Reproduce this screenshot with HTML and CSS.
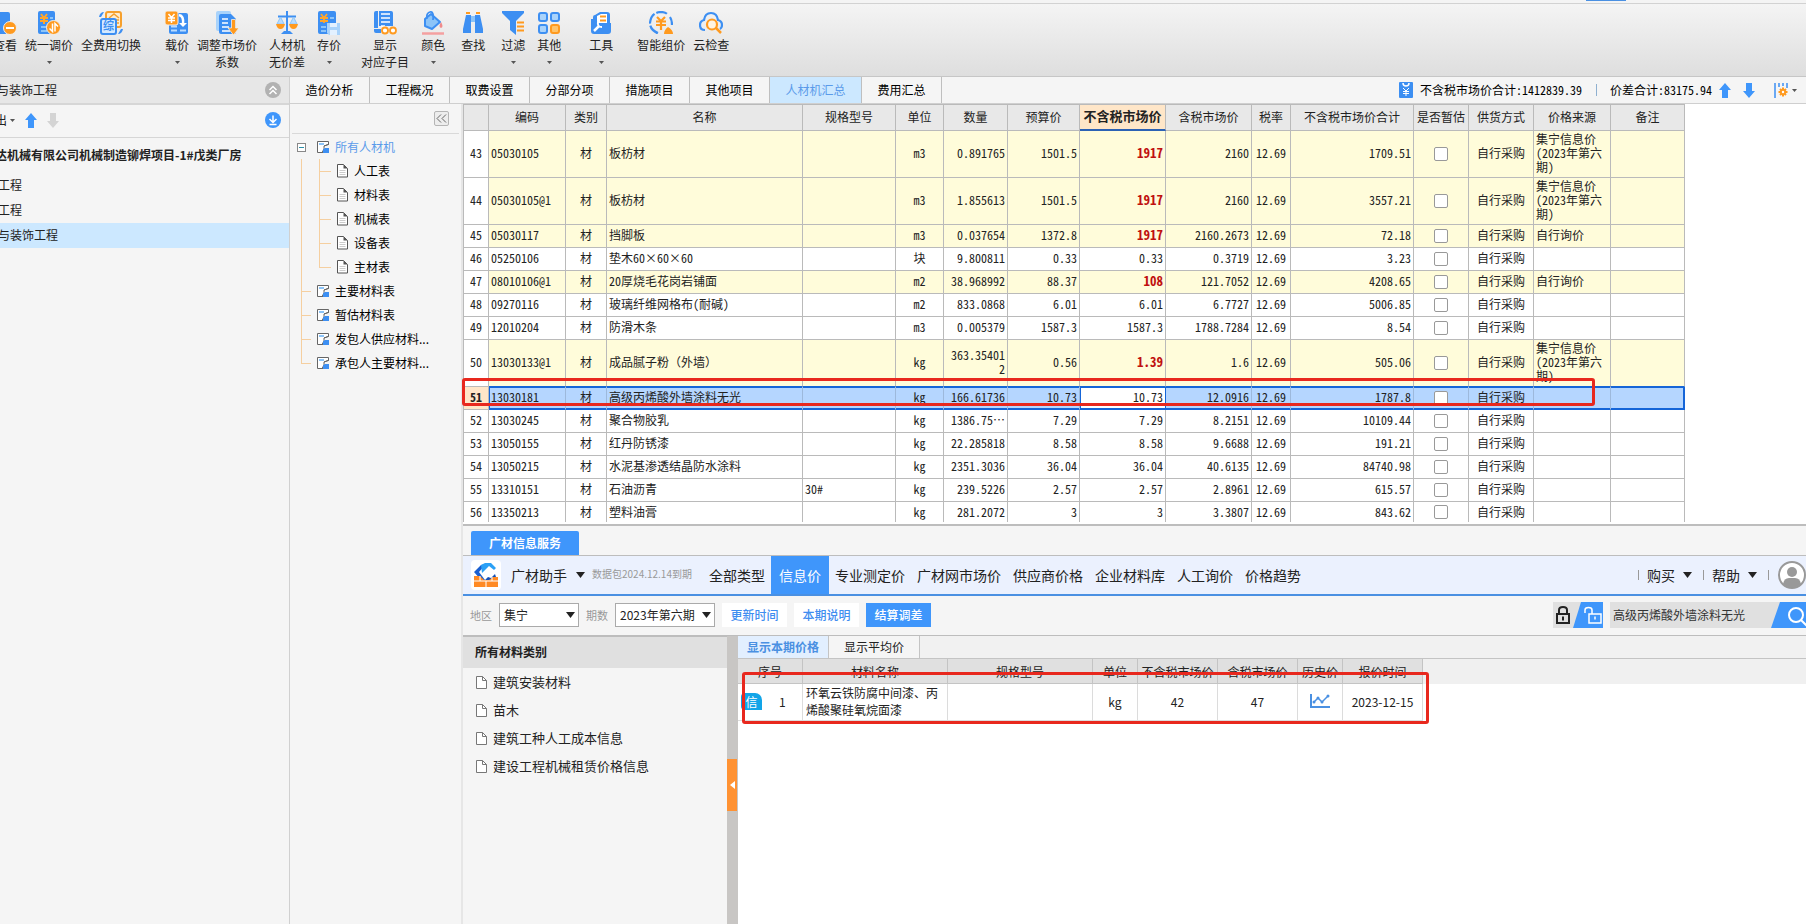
FILE: index.html
```html
<!DOCTYPE html>
<html lang="zh-CN">
<head>
<meta charset="utf-8">
<title>人材机汇总</title>
<link rel="stylesheet" href="styles.css">
</head>
<body>
<svg class="defs" aria-hidden="true">
  <symbol id="i-sheet" viewBox="0 0 14 14"><path d="M1.500 1.500h11v3L8 6v3l-2 3.500H1.500z" fill="#fff" stroke="#666"/><path d="M3 3h5v2H3z" fill="#8cc4f8"/><path d="M8 6l5-2M6 12.500h7" stroke="#666" fill="none"/><path d="M7 9.500L9 8h4v5H7z" fill="#3d8ff2"/></symbol>
  <symbol id="i-doc" viewBox="0 0 11 14"><path d="M.5 .5h6l4 4v8.500H.5z" fill="#fff" stroke="#555"/><path d="M6.500 .5v4h4z" fill="#555"/><path d="M2.500 6.500h6M2.500 8.500h6M2.500 10.500h6" stroke="#ccc"/></symbol>
  <symbol id="i-file" viewBox="0 0 11 13"><path d="M.5 .5h6l4 4v8H.5z" fill="#fff" stroke="#777"/><path d="M6.500 .5v4h4" fill="none" stroke="#777"/></symbol>
  <symbol id="i-caret" viewBox="0 0 5 3"><path d="M0 0h5L2.500 3z" fill="currentColor"/></symbol>
  <symbol id="i-up" viewBox="0 0 12 15"><path d="M6 0l6 7H9v8H3V7H0z" fill="currentColor"/></symbol>
  <symbol id="i-down" viewBox="0 0 12 15"><path d="M6 15l6-7H9V0H3v8H0z" fill="currentColor"/></symbol>
</svg>
<div class="app">
  <div class="strip"><span class="strip-mark"></span></div>
  <div class="ribbon">
    <button class="tool"><svg viewBox="0 0 24 24"><rect x="0" y="1" width="17" height="22" rx="2" fill="#3d8ff2"/><circle cx="17" cy="17" r="6.500" fill="#ff9a1f" stroke="#eee"/><path d="M13 17h8" stroke="#fff" stroke-width="2"/></svg><span>查看</span></button>
    <button class="tool"><svg viewBox="0 0 24 24"><rect x="1" y="0" width="17" height="23" rx="2" fill="#3d8ff2"/><path d="M4 3l3 4 3-4M3 7h8M3 10h8M7 7v6" stroke="#ffa62b" stroke-width="2" fill="none"/><path d="M4 16h6M4 20h6M13 7h3" stroke="#8cc4f8" stroke-width="2"/><circle cx="16.500" cy="16.500" r="7" fill="#ff9a1f" stroke="#f0f0f0"/><path d="M15.500 12.500v8l-3-3M18 20.500v-8l3 3" stroke="#fff" stroke-width="1.500" fill="none"/></svg><span>统一调价</span><svg class="dd"><use href="#i-caret"/></svg></button>
    <button class="tool"><svg viewBox="0 0 24 24"><rect x="7" y="1" width="15" height="15" rx="2" fill="#ffeccc" stroke="#f6a02d" stroke-width="2"/><path d="M10 7l5-4 5 4M17 9h3M17 12h3" stroke="#f6a02d" stroke-width="1.500" fill="none"/><path d="M0 6q1-5 5-5L2 6zM24 18q-1 5-5 5l3-5z" fill="#3d8ff2"/><rect x="2" y="8" width="15" height="15" rx="2" fill="#d4e9ff" stroke="#3d8ff2" stroke-width="2"/><text x="4" y="19" class="glyph">综</text></svg><span>全费用切换</span></button>
    <button class="tool g16"><svg viewBox="0 0 24 24"><rect x="4" y="2" width="19" height="21" rx="2" fill="#3d8ff2"/><path d="M6 15.500h6M6 19.500h6M15 19.500h6" stroke="#b9dcff" stroke-width="2"/><rect x="0" y="0" width="13" height="14" rx="2" fill="#ff9a1f" stroke="#f0f0f0"/><path d="M3.500 3L6.500 6.500 9.500 3M3 7h7M3 9.500h7M6.500 7v5" stroke="#fff" stroke-width="1.500" fill="none"/><path d="M14 4q5 1 4 9" stroke="#fff" stroke-width="2.500" fill="none"/><path d="M14 12h8l-4 4z" fill="#fff"/></svg><span>载价</span><svg class="dd"><use href="#i-caret"/></svg></button>
    <button class="tool"><svg viewBox="0 0 24 24"><rect x="1" y="0" width="15" height="20" rx="2" fill="#a9d3fb"/><path d="M4 5q0-2 2-2h10l5 5v13q0 2-2 2H6q-2 0-2-2z" fill="#3d8ff2"/><path d="M7 8h6M7 12h6M7 16h7M7 20h8" stroke="#fff" stroke-width="1.500"/><path d="M16.500 8.500h4V17h3.500l-5.500 7-5.500-7h3.500z" fill="#ff9a1f" stroke="#f0f0f0" stroke-width=".8"/></svg><span>调整市场价<br>系数</span></button>
    <button class="tool g4"><svg viewBox="0 0 24 24"><path d="M12 0v22M3 5.500h18" stroke="#3d8ff2" stroke-width="2"/><path d="M6 23h12l-3-3H9z" fill="#3d8ff2"/><path d="M5.500 6L2 13h7zM18.500 6L15 13h7z" fill="#b9dcff" stroke="#8cc4f8"/><path d="M1 13h9q-1 5-4.500 5T1 13zM14 13h9q-1 5-4.500 5T14 13z" fill="#ff9a1f"/></svg><span>人材机<br>无价差</span></button>
    <button class="tool g4"><svg viewBox="0 0 24 24"><rect x="1" y="0" width="18" height="23" rx="2" fill="#3d8ff2"/><path d="M4 3l3 4 3-4M3 7h8M3 10h8M7 7v5" stroke="#ffa62b" stroke-width="1.800" fill="none"/><path d="M4 16h5M4 20h5M13 7h4" stroke="#8cc4f8" stroke-width="2"/><path d="M10 12h13v12H12l-2-2z" fill="#a9d3fb"/><path d="M13 12h7v4h-7zM13 19h7v5h-7z" fill="#e3f1ff"/></svg><span>存价</span><svg class="dd"><use href="#i-caret"/></svg></button>
    <button class="tool g12"><svg viewBox="0 0 24 24"><path d="M1 2q0-2 2-2h2v17H1zM1 18h7v4H3q-2 0-2-2z" fill="#3d8ff2"/><path d="M6 0h12q2 0 2 2v13H6z" fill="#3d8ff2"/><path d="M8 3h9M8 7h9M8 11h9M8 15h4" stroke="#fff" stroke-width="1.500"/><circle cx="12" cy="19.500" r="3" fill="#fff" stroke="#ff9a1f" stroke-width="1.800"/><circle cx="20" cy="19.500" r="3" fill="#fff" stroke="#ff9a1f" stroke-width="1.800"/></svg><span>显示<br>对应子目</span></button>
    <button class="tool g4"><svg viewBox="0 0 24 24"><path d="M10 3l9 8-8 7-7-3V8z" fill="#8cc4f8" stroke="#3d8ff2" stroke-width="2" stroke-linejoin="round"/><path d="M6 8q-1-6 3-7t3 8" fill="none" stroke="#3d8ff2" stroke-width="1.800"/><path d="M20 11q3 5 0 6-3-1 0-6z" fill="#f08b8b"/><path d="M1 22.500h22" stroke="#f4a0a0" stroke-width="2.500"/></svg><span>颜色</span><svg class="dd"><use href="#i-caret"/></svg></button>
    <button class="tool g8"><svg viewBox="0 0 24 24"><path d="M5 4h5v18H2V18zM14 4h5l3 14v4h-8z" fill="#3d8ff2"/><path d="M10 5h4v6h-4z" fill="#8cc4f8"/><path d="M5 2h4M15 2h4" stroke="#ff9a1f" stroke-width="2"/></svg><span>查找</span></button>
    <button class="tool g8"><svg viewBox="0 0 24 24"><path d="M1 0h22v2l-8 8v14l-6-5v-9L1 2z" fill="#3d8ff2"/><path d="M16 11.500h7M16 15.500h7M16 19.500h7" stroke="#ff9a1f" stroke-width="2"/></svg><span>过滤</span><svg class="dd"><use href="#i-caret"/></svg></button>
    <button class="tool g4"><svg viewBox="0 0 24 24"><g fill="#a9d3fb" stroke="#3d8ff2" stroke-width="2"><rect x="2" y="2" width="8" height="8" rx="2"/><rect x="14" y="2" width="8" height="8" rx="2"/><rect x="2" y="14" width="8" height="8" rx="2"/></g><rect x="14" y="14" width="8" height="8" rx="2" fill="#ffc46b" stroke="#ff9a1f" stroke-width="2"/></svg><span>其他</span><svg class="dd"><use href="#i-caret"/></svg></button>
    <button class="tool g20"><svg viewBox="0 0 24 24"><path d="M4 6q0-2 2-2l5-3h7q3 0 3 3v10H4z" fill="#3d8ff2"/><path d="M8 5l4-2h6v11H8z" fill="#fff"/><path d="M11 5.500h6M11 9.500h6" stroke="#ff9a1f" stroke-width="1.800"/><path d="M2 8h4l3 4h13v8q0 3-3 3H5q-3 0-3-3z" fill="#3d8ff2"/><path d="M5 20l5-5" stroke="#fff" stroke-width="2.500"/><path d="M9 11q-1 5 4 5" stroke="#fff" stroke-width="2" fill="none"/></svg><span>工具</span><svg class="dd"><use href="#i-caret"/></svg></button>
    <button class="tool g16"><svg viewBox="0 0 24 24"><path d="M9 22Q1 19 1 12 2 1.500 12 1q5 0 7 3M21 6q2 3 2 8M4 19l4 3" stroke="#3d8ff2" stroke-width="2.200" fill="none" stroke-dasharray="11 2"/><path d="M8 6l4 4 4-4M7 10.500h10M7 14h10M12 10v9" stroke="#ff9a1f" stroke-width="2.200" fill="none"/><path d="M15 23q0-4 4-7 5 3 5 7z" fill="#ff9a1f"/></svg><span>智能组价</span></button>
    <button class="tool"><svg viewBox="0 0 24 24"><path d="M6 19q-5 0-5-5 0-4 4-5 1-7 7-7t7 7q4 1 4 5 0 3-2 4" stroke="#3d8ff2" stroke-width="2.200" fill="none"/><circle cx="13" cy="13.500" r="5" fill="#fff4e0" stroke="#ff9a1f" stroke-width="2.200"/><path d="M17 17l5 5" stroke="#ff9a1f" stroke-width="2.500"/></svg><span>云检查</span></button>
  </div>
  <div class="body">
    <aside class="side">
      <div class="side-head"><span>与装饰工程</span><button class="round grey" aria-label="收起"><svg viewBox="0 0 16 16"><path d="M4.500 8L8 4.500 11.500 8M4.500 12L8 8.500l3.500 3.500" stroke="#fff" stroke-width="1.500" fill="none"/></svg></button></div>
      <div class="side-tools"><button class="exp">出<svg class="dd"><use href="#i-caret"/></svg></button><button class="arw" aria-label="上移"><svg><use href="#i-up"/></svg></button><button class="arw off" aria-label="下移"><svg><use href="#i-down"/></svg></button><button class="round blue" aria-label="下载"><svg viewBox="0 0 16 16"><path d="M8 3.500V10M4.500 7L8 10.500 11.500 7M4.500 12.500h7" stroke="#fff" stroke-width="1.500" fill="none"/></svg></button></div>
      <div class="proj">达机械有限公司机械制造铆焊项目-1#戊类厂房</div>
      <div class="proj-row">工程</div>
      <div class="proj-row">工程</div>
      <div class="proj-row on">与装饰工程</div>
    </aside>
    <div class="work">
      <div class="tabbar">
        <button>造价分析</button><button>工程概况</button><button>取费设置</button><button>分部分项</button><button>措施项目</button><button>其他项目</button><button class="on">人材机汇总</button><button>费用汇总</button>
        <div class="sum">
          <svg width="14" height="16" viewBox="0 0 14 16"><rect width="14" height="16" rx="1" fill="#3d8ff2"/><path d="M4 1q0 3 3 3t3-3" fill="none" stroke="#fff" stroke-width="1.500"/><path d="M4 6l3 3 3-3M4 9.500h6M4 11.500h6M7 9v5" fill="none" stroke="#fff"/></svg>
          <span class="half">不含税市场价合计:1412839.39</span><i class="bar"></i><span class="half">价差合计:83175.94</span>
          <button class="arw" aria-label="上移"><svg><use href="#i-up"/></svg></button><button class="arw" aria-label="下移"><svg><use href="#i-down"/></svg></button>
          <button class="cfg" aria-label="设置"><svg width="14" height="15" viewBox="0 0 14 15"><path d="M1 0v15M5 0v4M9 0v3M13 0v5" stroke="#3d8ff2" stroke-width="1.500"/><path d="M9 4.500v9M4.500 9h9M6 6l6 6M12 6l-6 6" stroke="#ff9a1f" stroke-width="2"/><circle cx="9" cy="9" r="3" fill="#ff9a1f"/><circle cx="9" cy="9" r="1.200" fill="#fff"/></svg><svg class="dd"><use href="#i-caret"/></svg></button>
        </div>
      </div>
      <div class="cols">
        <nav class="tree">
          <div class="tree-top"><button aria-label="折叠"><svg width="11" height="9" viewBox="0 0 11 9"><path d="M5 .5l-4 4 4 4M10 .5l-4 4 4 4" fill="none" stroke="#666"/></svg></button></div>
          <ul class="root">
            <li class="top"><div class="node"><button class="fold" aria-label="折叠"></button><svg class="s"><use href="#i-sheet"/></svg><a href="#">所有人材机</a></div>
              <ul class="kids">
                <li><svg class="d"><use href="#i-doc"/></svg><span>人工表</span></li><li><svg class="d"><use href="#i-doc"/></svg><span>材料表</span></li><li><svg class="d"><use href="#i-doc"/></svg><span>机械表</span></li><li><svg class="d"><use href="#i-doc"/></svg><span>设备表</span></li><li><svg class="d"><use href="#i-doc"/></svg><span>主材表</span></li>
              </ul></li>
            <li class="leaf"><svg class="s"><use href="#i-sheet"/></svg><span>主要材料表</span></li>
            <li class="leaf"><svg class="s"><use href="#i-sheet"/></svg><span>暂估材料表</span></li>
            <li class="leaf"><svg class="s"><use href="#i-sheet"/></svg><span>发包人供应材料...</span></li>
            <li class="leaf"><svg class="s"><use href="#i-sheet"/></svg><span>承包人主要材料...</span></li>
          </ul>
        </nav>
        <main class="main">
          <section class="sheet">
            <table class="grid half">
              <colgroup><col class="w25"><col class="w77"><col class="w41"><col class="w196"><col class="w93"><col class="w48"><col class="w64"><col class="w72"><col class="w86"><col class="w86"><col class="w39"><col class="w123"><col class="w55"><col class="w65"><col class="w77"><col class="w74"></colgroup>
              <thead><tr><th></th><th>编码</th><th>类别</th><th>名称</th><th>规格型号</th><th>单位</th><th>数量</th><th>预算价</th><th class="cur">不含税市场价</th><th>含税市场价</th><th>税率</th><th>不含税市场价合计</th><th>是否暂估</th><th>供货方式</th><th>价格来源</th><th>备注</th></tr></thead>
              <tbody>
              <tr class="y tall"><th>43</th><td>05030105</td><td>材</td><td>板枋材</td><td></td><td>m3</td><td>0.891765</td><td>1501.5</td><td>1917</td><td>2160</td><td>12.69</td><td>1709.51</td><td><input type="checkbox" aria-label="暂估"></td><td>自行采购</td><td>集宁信息价(2023年第六期)</td><td></td></tr>
              <tr class="y tall"><th>44</th><td>05030105@1</td><td>材</td><td>板枋材</td><td></td><td>m3</td><td>1.855613</td><td>1501.5</td><td>1917</td><td>2160</td><td>12.69</td><td>3557.21</td><td><input type="checkbox" aria-label="暂估"></td><td>自行采购</td><td>集宁信息价(2023年第六期)</td><td></td></tr>
              <tr class="y"><th>45</th><td>05030117</td><td>材</td><td>挡脚板</td><td></td><td>m3</td><td>0.037654</td><td>1372.8</td><td>1917</td><td>2160.2673</td><td>12.69</td><td>72.18</td><td><input type="checkbox" aria-label="暂估"></td><td>自行采购</td><td>自行询价</td><td></td></tr>
              <tr><th>46</th><td>05250106</td><td>材</td><td>垫木60×60×60</td><td></td><td>块</td><td>9.800811</td><td>0.33</td><td>0.33</td><td>0.3719</td><td>12.69</td><td>3.23</td><td><input type="checkbox" aria-label="暂估"></td><td>自行采购</td><td></td><td></td></tr>
              <tr class="y"><th>47</th><td>08010106@1</td><td>材</td><td>20厚烧毛花岗岩铺面</td><td></td><td>m2</td><td>38.968992</td><td>88.37</td><td>108</td><td>121.7052</td><td>12.69</td><td>4208.65</td><td><input type="checkbox" aria-label="暂估"></td><td>自行采购</td><td>自行询价</td><td></td></tr>
              <tr><th>48</th><td>09270116</td><td>材</td><td>玻璃纤维网格布(耐碱)</td><td></td><td>m2</td><td>833.0868</td><td>6.01</td><td>6.01</td><td>6.7727</td><td>12.69</td><td>5006.85</td><td><input type="checkbox" aria-label="暂估"></td><td>自行采购</td><td></td><td></td></tr>
              <tr><th>49</th><td>12010204</td><td>材</td><td>防滑木条</td><td></td><td>m3</td><td>0.005379</td><td>1587.3</td><td>1587.3</td><td>1788.7284</td><td>12.69</td><td>8.54</td><td><input type="checkbox" aria-label="暂估"></td><td>自行采购</td><td></td><td></td></tr>
              <tr class="y tall above"><th>50</th><td>13030133@1</td><td>材</td><td class="full">成品腻子粉（外墙）</td><td></td><td>kg</td><td>363.354012</td><td>0.56</td><td>1.39</td><td>1.6</td><td>12.69</td><td>505.06</td><td><input type="checkbox" aria-label="暂估"></td><td>自行采购</td><td>集宁信息价(2023年第六期)</td><td></td></tr>
              <tr class="sel"><th>51</th><td>13030181</td><td>材</td><td>高级丙烯酸外墙涂料无光</td><td></td><td>kg</td><td>166.61736</td><td>10.73</td><td>10.73</td><td>12.0916</td><td>12.69</td><td>1787.8</td><td><input type="checkbox" aria-label="暂估"></td><td>自行采购</td><td></td><td></td></tr>
              <tr><th>52</th><td>13030245</td><td>材</td><td>聚合物胶乳</td><td></td><td>kg</td><td>1386.75⋯</td><td>7.29</td><td>7.29</td><td>8.2151</td><td>12.69</td><td>10109.44</td><td><input type="checkbox" aria-label="暂估"></td><td>自行采购</td><td></td><td></td></tr>
              <tr><th>53</th><td>13050155</td><td>材</td><td>红丹防锈漆</td><td></td><td>kg</td><td>22.285818</td><td>8.58</td><td>8.58</td><td>9.6688</td><td>12.69</td><td>191.21</td><td><input type="checkbox" aria-label="暂估"></td><td>自行采购</td><td></td><td></td></tr>
              <tr><th>54</th><td>13050215</td><td>材</td><td>水泥基渗透结晶防水涂料</td><td></td><td>kg</td><td>2351.3036</td><td>36.04</td><td>36.04</td><td>40.6135</td><td>12.69</td><td>84740.98</td><td><input type="checkbox" aria-label="暂估"></td><td>自行采购</td><td></td><td></td></tr>
              <tr><th>55</th><td>13310151</td><td>材</td><td>石油沥青</td><td>30#</td><td>kg</td><td>239.5226</td><td>2.57</td><td>2.57</td><td>2.8961</td><td>12.69</td><td>615.57</td><td><input type="checkbox" aria-label="暂估"></td><td>自行采购</td><td></td><td></td></tr>
              <tr class="last"><th>56</th><td>13350213</td><td>材</td><td>塑料油膏</td><td></td><td>kg</td><td>281.2072</td><td>3</td><td>3</td><td>3.3807</td><td>12.69</td><td>843.62</td><td><input type="checkbox" aria-label="暂估"></td><td>自行采购</td><td></td><td></td></tr>
              </tbody>
            </table>
            <div class="mark mark-a"></div>
          </section>
          <div class="svc-tabs"><button>广材信息服务</button></div>
          <div class="svc-nav">
            <span class="logo"><svg viewBox="0 0 30 30"><path d="M10 5L3 12l7 8h4l-6-8 7-8z" fill="#1a5fd0"/><path d="M10 5l4-2h6l5 5-2 2-5-4-7 7z" fill="#2ba0f5"/><path d="M14 20l3-3 3 1 4-4 1 3-6 5h-4z" fill="#1450b8"/><path d="M3 16h6l4 4h5l4-3h5v10H3z" fill="#ff8a24"/><path d="M3 21h24M9 16v5M15 21v6M21 17v4" stroke="#fff"/></svg></span>
            <button class="brand">广材助手<svg class="tri" viewBox="0 0 9 6"><path d="M0 0h9L4.500 6z" fill="currentColor"/></svg></button>
            <span class="due">数据包2024.12.14到期</span>
            <button class="nv all">全部类型</button><button class="nv on">信息价</button><button class="nv">专业测定价</button><button class="nv">广材网市场价</button><button class="nv">供应商价格</button><button class="nv">企业材料库</button><button class="nv">人工询价</button><button class="nv">价格趋势</button>
            <div class="acct"><button>购买<svg class="tri" viewBox="0 0 9 6"><path d="M0 0h9L4.500 6z" fill="currentColor"/></svg></button><button>帮助<svg class="tri" viewBox="0 0 9 6"><path d="M0 0h9L4.500 6z" fill="currentColor"/></svg></button><i></i>
            <svg class="ava" viewBox="0 0 28 28"><circle cx="14" cy="14" r="13" fill="#fff" stroke="#999" stroke-width="2"/><circle cx="14" cy="11" r="5" fill="#999"/><path d="M5 23q1-6 6-6h6q5 0 6 6-9 8-18 0z" fill="#999"/></svg></div>
          </div>
          <div class="svc-filter">
            <label for="area">地区</label><span class="pick area"><select id="area"><option>集宁</option></select><svg class="tri" viewBox="0 0 9 6"><path d="M0 0h9L4.500 6z" fill="currentColor"/></svg></span>
            <label for="term">期数</label><span class="pick term"><select id="term"><option>2023年第六期</option></select><svg class="tri" viewBox="0 0 9 6"><path d="M0 0h9L4.500 6z" fill="currentColor"/></svg></span>
            <button class="fb">更新时间</button><button class="fb">本期说明</button><button class="fb on">结算调差</button>
            <button class="locks" aria-label="锁定"><svg viewBox="0 0 50 26"><path d="M28 0h22v26H20z" fill="#3f96fb"/><rect x="4" y="12" width="12" height="9" fill="none" stroke="#222" stroke-width="2"/><path d="M6 12V8q0-3 4-3t4 3v4" fill="none" stroke="#222" stroke-width="2"/><path d="M10 14.500v4" stroke="#222" stroke-width="2"/><rect x="36" y="12" width="12" height="9" fill="none" stroke="#fff" stroke-width="1.500"/><path d="M32 11V8q0-2.500 3.500-2.500T39 8v4M42 14.500v3" fill="none" stroke="#fff" stroke-width="1.500"/></svg></button>
            <div class="search"><input type="text" aria-label="搜索" value="高级丙烯酸外墙涂料无光"><button aria-label="搜索"><svg viewBox="0 0 35 26"><path d="M9 0h26v26H0z" fill="#3f96fb"/><circle cx="25" cy="13" r="7" fill="none" stroke="#fff" stroke-width="2"/><path d="M30 18l6 6" stroke="#fff" stroke-width="2"/></svg></button></div>
          </div>
          <div class="svc-body">
            <div class="cats">
              <h2>所有材料类别</h2>
              <ul><li><svg><use href="#i-file"/></svg>建筑安装材料</li><li><svg><use href="#i-file"/></svg>苗木</li><li><svg><use href="#i-file"/></svg>建筑工种人工成本信息</li><li><svg><use href="#i-file"/></svg>建设工程机械租赁价格信息</li></ul>
            </div>
            <div class="split"><button aria-label="收起"><svg width="5" height="8" viewBox="0 0 5 8"><path d="M5 0v8L0 4z" fill="#fff"/></svg></button></div>
            <div class="price">
              <div class="ptabs"><button class="on">显示本期价格</button><button>显示平均价</button></div>
              <div class="pwrap">
              <table class="ptable">
                <colgroup><col class="w65"><col class="w145"><col class="w145"><col class="w45"><col class="w80"><col class="w80"><col class="w45"><col class="w80"></colgroup>
                <thead><tr><th>序号</th><th>材料名称</th><th>规格型号</th><th>单位</th><th>不含税市场价</th><th>含税市场价</th><th>历史价</th><th>报价时间</th></tr></thead>
                <tbody><tr><td><div class="no"><span class="tag">信</span><span>1</span></div></td><td class="l">环氧云铁防腐中间漆、丙烯酸聚硅氧烷面漆</td><td></td><td>kg</td><td>42</td><td>47</td><td><svg width="20" height="14" viewBox="0 0 20 14"><path d="M1 0v13h19" fill="none" stroke="#4a90e2" stroke-width="2"/><path d="M4 8l4-4 4 4 6-6" fill="none" stroke="#4a90e2" stroke-width="1.500"/><g fill="#4a90e2"><circle cx="4" cy="8" r="1.500"/><circle cx="8" cy="4" r="1.500"/><circle cx="12" cy="8" r="1.500"/><circle cx="18" cy="2" r="1.500"/></g></svg></td><td>2023-12-15</td></tr></tbody>
              </table>
              </div>
              <div class="mark mark-b"></div>
            </div>
          </div>
        </main>
      </div>
    </div>
  </div>
</div>
</body>
</html>
```
FILE: styles.css
```css
* { box-sizing: border-box; }
body { margin: 0; font: 12px/16px "Noto Sans CJK SC", "Noto Sans", sans-serif; color: #222; background: #f5f5f5; overflow: hidden; }
button { font: inherit; color: inherit; border: 0; padding: 0; background: none; white-space: nowrap; }
ul { list-style: none; margin: 0; padding: 0; }
a { color: #5b9bea; text-decoration: none; }
svg { display: block; flex: none; }
.defs { position: absolute; width: 0; height: 0; }
.glyph { font-size: 11px; font-weight: bold; fill: #3d8ff2; }
.half { font-feature-settings: "hwid" 1; }
.full { font-feature-settings: normal; }
.app { min-height: 100vh; display: flex; flex-direction: column; }

.strip { display: flex; justify-content: flex-end; height: 4px; padding-right: 180px; background: #f4f4f4; border-bottom: 1px solid #d2d2d2; }
.strip-mark { width: 40px; height: 1px; background: #4a90e2; }

.ribbon { display: flex; gap: 8px; height: 73px; padding-top: 7px; background: linear-gradient(#f4f4f4, #dedede); border-bottom: 1px solid #c6c6c6; overflow: hidden; }
.tool { display: flex; flex-direction: column; align-items: center; flex: none; line-height: 17px; }
.tool > svg { width: 24px; height: 24px; margin-bottom: 1px; }
.tool:first-child { margin-left: -7px; }
.tool svg.dd { margin: 8px 0 0; }
svg.dd { width: 5px; height: 3px; color: #555; }
.g4 { margin-left: 4px; }
.g8 { margin-left: 8px; }
.g12 { margin-left: 12px; }
.g16 { margin-left: 16px; }
.g20 { margin-left: 20px; }

.body { display: flex; flex: 1; }
.side { flex: none; width: 290px; border-right: 1px solid #d0d0d0; overflow: hidden; }
.side-head { display: flex; align-items: center; justify-content: space-between; height: 28px; padding-right: 8px; background: #e7e7e7; border-bottom: 2px solid #d6d6d6; text-indent: -3px; }
.side-tools { display: flex; align-items: center; height: 33px; padding: 0 8px 2px 0; border-bottom: 1px solid #d6d6d6; }
.exp { display: flex; align-items: center; gap: 3px; margin-left: -5px; }
.arw { margin-left: 10px; color: #3f96fb; }
.arw svg { width: 12px; height: 15px; }
.off { color: #d4d4d4; }
.round { width: 16px; height: 16px; border-radius: 50%; margin-left: auto; }
.grey { background: #b2b2b2; }
.blue { background: #3f96fb; }
.proj { height: 35px; line-height: 33px; font-weight: bold; text-indent: -5px; white-space: nowrap; }
.proj-row { height: 25px; line-height: 23px; text-indent: -2px; }
.proj-row.on { background: #cce8ff; }

.work { flex: 1; min-width: 0; display: flex; flex-direction: column; }
.tabbar { display: flex; height: 27px; border-bottom: 1px solid #cfcfcf; }
.tabbar > button { width: 80px; border-right: 1px solid #bfbfbf; color: #000; }
.tabbar > .on { width: 92px; background: #cce8ff; color: #5b9bea; }
.sum { display: flex; align-items: center; margin-left: auto; padding-right: 9px; color: #000; }
.sum .half { margin-left: 7px; }
.bar { width: 1px; height: 12px; background: #8fb0d0; margin: 0 6px 0 14px; }
.sum .arw { margin-left: 7px; }
.sum .arw + .arw { margin-left: 12px; }
.cfg { display: flex; align-items: center; gap: 4px; margin-left: 19px; }

.cols { display: flex; flex: 1; }
.tree { flex: none; width: 171px; color: #000; }
.tree-top { display: flex; justify-content: flex-end; align-items: center; height: 30px; margin: 0 2px; padding-right: 10px; border-bottom: 1px solid #d9d9d9; }
.tree-top button { display: grid; place-items: center; width: 15px; height: 15px; border: 1px solid #b5b5b5; border-radius: 2px; background: #ededed; }
.root { padding: 1px 0 0 11px; }
.node { display: flex; align-items: center; height: 24px; gap: 5px; margin-left: -4px; }
.fold { width: 9px; height: 9px; margin-right: 5px; border: 1px solid #888; background: linear-gradient(#2a8fa8, #2a8fa8) center / 5px 1px no-repeat #fff; }
svg.s { width: 14px; height: 14px; }
svg.d { width: 11px; height: 14px; }
.kids { padding-left: 18px; background: linear-gradient(#f5cfa0, #f5cfa0) left top / 1px 100% no-repeat; }
.kids li, .leaf { display: flex; align-items: center; height: 24px; white-space: nowrap; }
.kids li { gap: 6px; }
.leaf { gap: 5px; }
.kids li::before, .leaf::before { content: ""; align-self: stretch; flex: none; width: 12px; background: linear-gradient(#f5cfa0, #f5cfa0) left top / 1px 100% no-repeat, linear-gradient(#f5cfa0, #f5cfa0) left center / 100% 1px no-repeat; }
.leaf::before { width: 10px; }
.kids li:last-child::before, .leaf:last-child::before { background-size: 1px 50%, 100% 1px; }

.main { flex: 1; min-width: 0; display: flex; flex-direction: column; border-left: 2px solid #e6e6e6; }
.sheet { position: relative; background: #fff; border-bottom: 2px solid #bdbdbd; padding-bottom: 2px; }
.grid { width: 1222px; table-layout: fixed; border-collapse: separate; border-spacing: 0; border: 1px solid #bababa; border-width: 1px 0 0 1px; line-height: 14px; }
.grid th, .grid td { padding: 0 2px 2px; border: 1px solid #bababa; border-width: 0 1px 1px 0; font-weight: normal; text-align: center; }
.grid tr { height: 23px; }
.grid thead tr { height: 26px; }
.grid thead th { background: #e8e8e8; }
.grid thead .cur { background: #ffe6c8; font-size: 13px; font-weight: bold; padding: 0 0 2px; border-bottom: 2px solid #2c62b4; }
.grid .tall { height: 47px; }
.grid .y td { background: #fffcda; }
.grid td:nth-child(2), .grid td:nth-child(4), .grid td:nth-child(5), .grid td:nth-child(15) { text-align: left; }
.grid td:nth-child(7), .grid td:nth-child(8), .grid td:nth-child(9), .grid td:nth-child(10), .grid td:nth-child(12) { text-align: right; }
.grid td:nth-child(7) { word-break: break-all; }
.grid td:nth-child(13) { padding-bottom: 0; }
.grid td:nth-child(15) { padding-right: 8px; }
.grid .y td:nth-child(9) { color: #c01010; font-size: 13px; font-weight: bold; }
.grid input { appearance: none; display: block; width: 14px; height: 14px; margin: 0 auto; border: 1px solid #999; border-radius: 2px; background: #fff; }
.grid .above td { border-bottom-color: #1565d8; }
.grid .sel th { background: #ffe6c8; font-weight: bold; }
.grid .sel td { background: #b5d6ff; border-right-color: #9db9dc; border-bottom-color: #1565d8; box-shadow: inset 0 1px #1565d8, inset 0 -1px #1565d8; }
.grid .sel td:nth-child(2) { box-shadow: inset 0 1px #1565d8, inset 0 -1px #1565d8, inset 1px 0 #1565d8; }
.grid .sel td:nth-child(9) { background: #fff; border-right-color: #1565d8; box-shadow: inset 0 1px #1565d8, inset 0 -1px #1565d8, inset 1px 0 #1565d8; }
.grid .sel td:last-child { border-right: 2px solid #1565d8; }
.grid .last { height: 20px; }
.grid .last th, .grid .last td { border-bottom: 0; padding-bottom: 0; }
.w25 { width: 25px; } .w39 { width: 39px; } .w41 { width: 41px; } .w45 { width: 45px; } .w48 { width: 48px; } .w55 { width: 55px; } .w64 { width: 64px; } .w65 { width: 65px; } .w72 { width: 72px; } .w74 { width: 74px; } .w77 { width: 77px; } .w80 { width: 80px; } .w86 { width: 86px; } .w93 { width: 93px; } .w123 { width: 123px; } .w145 { width: 145px; } .w196 { width: 196px; }
.mark { position: absolute; border: 3px solid #e8281e; border-radius: 3px; pointer-events: none; }
.mark-a { left: -1px; top: 274px; width: 1133px; height: 28px; }
.mark-b { left: 4px; top: 36px; width: 687px; height: 52px; }

.svc-tabs { height: 30px; padding: 5px 8px 0; border-bottom: 1px solid #bdbdbd; }
.svc-tabs button { width: 108px; height: 24px; background: #3f96fb; color: #fff; font-weight: bold; border-radius: 2px 2px 0 0; }
.svc-nav { display: flex; align-items: center; height: 40px; padding-left: 8px; background: #ebf1fe; border-bottom: 2px solid #4a90e2; font-size: 14px; }
.logo { width: 30px; height: 30px; background: #fff; border-radius: 4px; }
.tri { width: 9px; height: 6px; color: #222; }
.brand { display: flex; align-items: center; gap: 9px; margin-left: 10px; }
.due { margin: 0 11px 2px 7px; font-size: 10px; color: #999; }
.nv { height: 38px; padding: 0 6px; }
.nv.on { padding: 0 8px; background: #3f96fb; color: #fff; }
.acct { display: flex; align-items: center; margin-left: auto; }
.acct button { display: flex; align-items: center; gap: 8px; width: 65px; }
.acct button::before, .acct i { content: ""; width: 1px; height: 10px; background: #999; }
.acct i { margin-right: 9px; }
.ava { width: 28px; height: 28px; }
.svc-filter { display: flex; align-items: center; height: 40px; padding: 0 0 1px 7px; border-bottom: 1px solid #bdbdbd; }
.svc-filter label { width: 29px; font-size: 11px; color: #999; }
.pick { display: grid; align-items: center; margin-right: 7px; }
.pick > * { grid-area: 1 / 1; }
.pick .tri { justify-self: end; margin-right: 4px; pointer-events: none; }
.pick select { appearance: none; width: 100%; height: 24px; padding: 0 4px; font: inherit; color: #222; border: 1px solid #aaa; border-radius: 0; background: #fff; }
.area { width: 80px; }
.term { width: 100px; }
.fb { width: 65px; height: 24px; margin-right: 7px; background: #fff; color: #3f8df0; font-weight: 500; }
.fb.on { background: #3f96fb; color: #fff; }
.locks { width: 50px; height: 26px; margin: 0 7px 0 auto; background: #e0e0e0; }
.search { display: flex; width: 196px; height: 26px; background: #e0e0e0; }
.search input { flex: 1; min-width: 0; border: 0; padding: 0 3px; background: none; font: inherit; color: #333; }
.search button { width: 35px; }
.svc-body { display: flex; flex: 1; }
.cats { width: 264px; border-top: 1px solid #bdbdbd; }
.cats h2 { margin: 0; padding-left: 12px; height: 31px; font-size: 12px; line-height: 30px; background: #e0e0e0; }
.cats ul { font-size: 13px; }
.cats li { display: flex; align-items: center; gap: 6px; height: 28px; padding-left: 13px; }
.cats svg { width: 11px; height: 13px; }
.split { display: flex; align-items: center; width: 11px; background: #c8c6c4; padding-top: 10px; }
.split button { display: grid; place-items: center; width: 10px; height: 52px; background: #ff9233; }
.price { position: relative; flex: 1; min-width: 0; background: #fff; }
.ptabs { display: flex; height: 23px; background: #f1f1f1; border-bottom: 1px solid #c4c4c4; }
.ptabs button { width: 91px; border-right: 1px solid #c4c4c4; background: #f5f5f5; }
.ptabs .on { background: #e2efff; color: #4a90e2; font-weight: bold; }
.pwrap { background: linear-gradient(#f0f0f0, #f0f0f0) top / 100% 25px no-repeat; }
.ptable { width: 685px; table-layout: fixed; border-spacing: 0; line-height: 17px; }
.ptable th, .ptable td { padding: 0 3px 2px; border: 1px solid #dcdcdc; border-width: 0 1px 1px 0; text-align: center; white-space: nowrap; }
.ptable th { height: 25px; padding: 0; background: #e0e0e0; border-color: #c4c4c4; font-weight: normal; }
.ptable td { height: 37px; }
.ptable .l { text-align: left; white-space: normal; }
.ptable td svg { margin: 0 auto; }
.no { display: flex; align-items: center; gap: 17px; }
.tag { width: 21px; height: 17px; border-radius: 4px 7px 0 4px; background: #12a5e8; color: #fff; line-height: 17px; }
```
